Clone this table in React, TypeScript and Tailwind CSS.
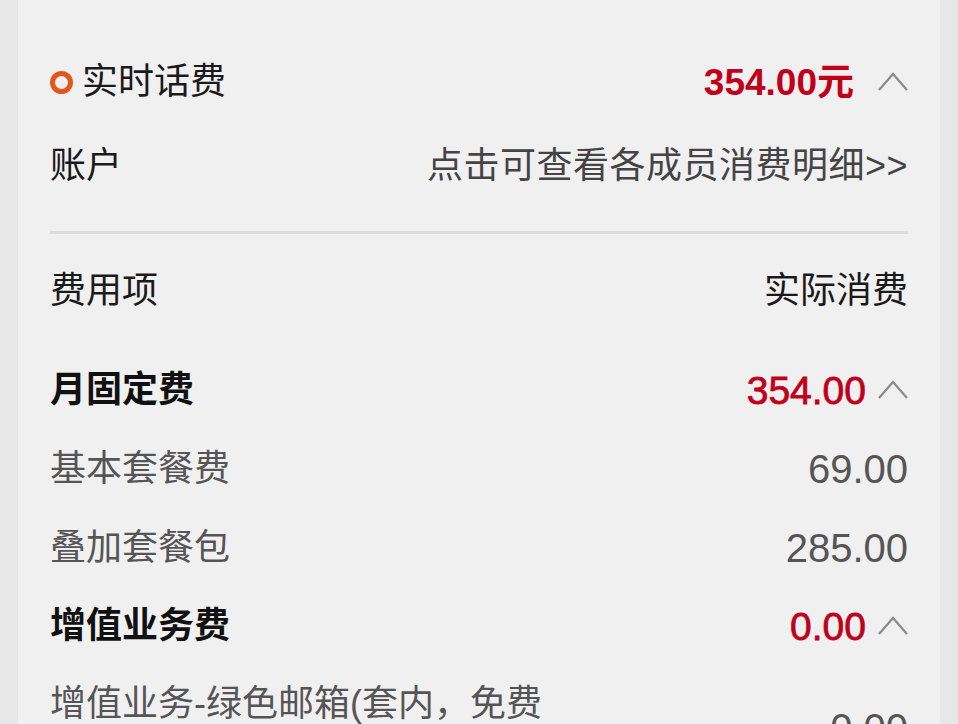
import type { ReactNode } from "react";

const font = "font-['Liberation_Sans','Noto_Sans_CJK_SC',sans-serif]";

function Chevron({ gap = "ml-[12px]" }: { gap?: string }) {
    return (
        <svg width="30" height="20" viewBox="0 0 30 20" className={`${gap} shrink-0`}>
            <polyline points="1,18 15,2 29,18" fill="none" stroke="#8a8a8a" strokeWidth="2.2" />
        </svg>
    );
}

function Row({ left, right, className }: { left: ReactNode; right: ReactNode; className: string }) {
    return (
        <div className={`flex items-center justify-between ${className}`}>
            <div>{left}</div>
            <div className="flex items-center">{right}</div>
        </div>
    );
}

export default function App() {
    return (
        <div className={`w-[958px] h-[724px] overflow-hidden bg-[#e7e7e7] px-[18px] ${font}`}>
            <div className="h-full bg-[#f0f0f0] pl-[32px] pr-[32px] pt-[40px] text-[36px] leading-none">
                <Row
                    className="h-[84px]"
                    left={
                        <div className="flex items-center">
                            <span className="w-[23px] h-[23px] rounded-full border-[5px] border-[#e4571c] mr-[9px]" />
                            <span className="text-[#1a1a1a]">实时话费</span>
                        </div>
                    }
                    right={
                        <>
                            <span className="text-[37px] font-bold text-[#c0001b]">354.00元</span>
                            <Chevron gap="ml-[24px]" />
                        </>
                    }
                />
                <Row
                    className="h-[84px]"
                    left={<span className="text-[#1a1a1a]">账户</span>}
                    right={<span className="text-[#444] tracking-[0.5px]">点击可查看各成员消费明细&gt;&gt;</span>}
                />
                <div className="mt-[23px] h-[3px] bg-[#dcdcdc]" />
                <Row
                    className="mt-[18px] h-[78px]"
                    left={<span className="text-[#1a1a1a]">费用项</span>}
                    right={<span className="text-[#1a1a1a]">实际消费</span>}
                />
                <Row
                    className="mt-[21px] h-[78px]"
                    left={<span className="font-bold text-[#111]">月固定费</span>}
                    right={
                        <>
                            <span className="text-[39px] text-[#c0001b] [-webkit-text-stroke:0.8px_#c0001b]">354.00</span>
                            <Chevron />
                        </>
                    }
                />
                <Row
                    className="h-[79px]"
                    left={<span className="text-[#555]">基本套餐费</span>}
                    right={<span className="text-[40px] text-[#555]">69.00</span>}
                />
                <Row
                    className="h-[79px]"
                    left={<span className="text-[#555]">叠加套餐包</span>}
                    right={<span className="text-[40px] text-[#555]">285.00</span>}
                />
                <Row
                    className="h-[78px]"
                    left={<span className="font-bold text-[#111]">增值业务费</span>}
                    right={
                        <>
                            <span className="text-[39px] text-[#c0001b] [-webkit-text-stroke:0.8px_#c0001b]">0.00</span>
                            <Chevron />
                        </>
                    }
                />
                <div className="flex items-start justify-between pt-[17px]">
                    <div className="leading-[44px] text-[#555]">增值业务-绿色邮箱(套内，免费</div>
                    <span className="mt-[26px] text-[40px] text-[#555]">0.00</span>
                </div>
            </div>
        </div>
    );
}
